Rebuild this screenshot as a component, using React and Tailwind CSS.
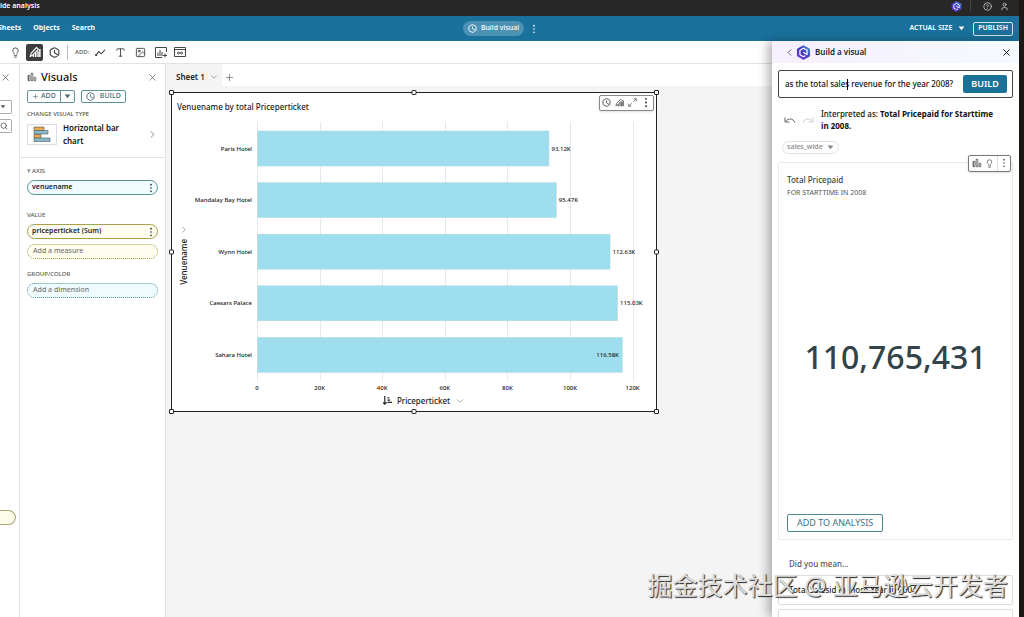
import { ChevronDown, ChevronLeft, ChevronRight, CircleHelp, Image, Lightbulb, Plus, Search, Type, User, X } from 'lucide-react';

const venues = [
  { name: 'Paris Hotel', value: 93.12 },
  { name: 'Mandalay Bay Hotel', value: 95.47 },
  { name: 'Wynn Hotel', value: 112.63 },
  { name: 'Caesars Palace', value: 115.03 },
  { name: 'Sahara Hotel', value: 116.58, inside: true },
];

const ticks = [0, 20, 40, 60, 80, 100, 120];

const QIcon = ({ className }) => (
  <svg viewBox="0 0 24 24" className={className} fill="none" stroke="currentColor" strokeWidth="2.500" strokeLinecap="round" strokeLinejoin="round">
    <path d="M17 20.5 13.5 22a3.5 3.5 0 0 1-3 0L4.500 18.800A3.500 3.500 0 0 1 2.600 15.800V8.200a3.500 3.500 0 0 1 1.900-3L10.500 2a3.500 3.500 0 0 1 3 0l6 3.200a3.500 3.500 0 0 1 1.900 3v7.600c0 1-.4 1.800-1 2.400L12 12.500V7.500" />
  </svg>
);

const QLogo = ({ className }) => (
  <svg viewBox="0 0 24 24" className={className}>
    <defs>
      <linearGradient id="q-fill" x1="0" y1="1" x2="1" y2="0">
        <stop offset="0" stopColor="#7a3fe0" />
        <stop offset="0.5" stopColor="#3d35b8" />
        <stop offset="1" stopColor="#4fa3f2" />
      </linearGradient>
    </defs>
    <path fill="url(#q-fill)" d="M12 0.500 21.500 5.500a2 2 0 0 1 1 1.800v9.400a2 2 0 0 1-1 1.800L13 23.200a2 2 0 0 1-2 0L2.500 18.500a2 2 0 0 1-1-1.800V7.300a2 2 0 0 1 1-1.800L11 .8z" />
    <path fill="none" stroke="#fff" strokeWidth="2" strokeLinecap="round" strokeLinejoin="round" d="M14.500 17.500 12 18.700 6.300 15.500V8.500L12 5.300l5.700 3.200v6.700L12 12" />
  </svg>
);

const BarsIcon = ({ className }) => (
  <svg viewBox="0 0 12 12" className={className} fill="none" stroke="currentColor">
    <path d="M1.500 4v6.500M1.500 4h2v6.500h-2zM5 1.500h2v9H5zM8.500 6.500h2v4h-2z" />
  </svg>
);

const BuildIcon = ({ className }) => (
  <svg viewBox="0 0 16 16" className={className} fill="none" stroke="currentColor" strokeWidth="1.500" strokeLinejoin="round">
    <path d="M1.500 14 3 9.500 10 2l2.500 2.500L5 12z" />
    <path d="M6 14.500v-3M9 14.500V8.500M12 14.500V7M14.500 14.500V4" strokeWidth="2" />
  </svg>
);

const Expand = ({ className }) => (
  <svg viewBox="0 0 12 12" className={className} fill="none" stroke="currentColor">
    <path d="M7 5l4-4M7.500 1H11v3.500M5 7l-4 4M1 7.500V11h3.500" />
  </svg>
);

const Dots = ({ className }) => (
  <svg viewBox="0 0 4 12" className={className} fill="currentColor">
    <circle cx="2" cy="2" r="1" />
    <circle cx="2" cy="6" r="1" />
    <circle cx="2" cy="10" r="1" />
  </svg>
);

const Caret = ({ className }) => (
  <svg viewBox="0 0 8 6" className={className} fill="currentColor">
    <path d="M.5.5h7L4 5z" />
  </svg>
);

const Undo = ({ className }) => (
  <svg viewBox="0 0 12 8" className={className} fill="none" stroke="currentColor">
    <path d="M1 1.500V6h4.500M1.500 5.500C4 2 9 2 11 6.500" />
  </svg>
);

const TopBar = () => (
  <header className="flex h-4 shrink-0 items-center bg-[#272727] text-white">
    <h1 className="-mt-1 flex-1 text-[7px] font-semibold leading-3">ide analysis</h1>
    <div className="-mt-1 flex items-center pr-[10px]">
      <button aria-label="Amazon Q"><QLogo className="size-[11px]" /></button>
      <span className="ml-2 mr-3 h-3 w-px bg-[#444]" />
      <button aria-label="Help"><CircleHelp className="size-[9px] text-gray-300" /></button>
      <button aria-label="Account" className="ml-2"><User className="size-[9px] text-gray-300" /></button>
    </div>
  </header>
);

const MenuBar = () => (
  <div className="grid h-[25px] shrink-0 grid-cols-[1fr_auto_1fr] items-center bg-[#1a719c] text-white">
    <nav className="-ml-[2px] flex gap-3 text-[7px] font-bold">
      <button>Sheets</button>
      <button>Objects</button>
      <button>Search</button>
    </nav>
    <div className="flex items-center gap-2 pr-5">
      <button className="flex h-[15px] items-center gap-1 rounded-full bg-[#4b92b4] px-[5px] text-[7px] font-medium">
        <QIcon className="size-[9px]" />
        Build visual
      </button>
      <button aria-label="More"><Dots className="h-[10px] w-1" /></button>
    </div>
    <div className="flex items-center justify-end gap-2 pr-[6px] text-[7px] font-semibold">
      <button className="flex items-center gap-[6px]">
        ACTUAL SIZE
        <Caret className="h-[5px] w-[7px]" />
      </button>
      <button className="h-[14px] rounded-xs border border-white/80 px-1">PUBLISH</button>
    </div>
  </div>
);

const Toolbar = () => (
  <div className="flex h-[23px] shrink-0 items-center border-b border-[#e3e3e3] bg-white text-[#444]">
    <button aria-label="Insights" className="ml-[10px]"><Lightbulb className="size-[11px]" /></button>
    <button aria-label="Visuals" className="ml-[5px] flex size-[17px] items-center justify-center rounded-xs bg-[#3d3d3d] text-white">
      <BuildIcon className="size-3" />
    </button>
    <button aria-label="Build with Q" className="ml-[6px]"><QIcon className="size-[11px]" /></button>
    <span className="ml-[7px] h-[15px] w-px bg-[#bbb]" />
    <span className="ml-[7px] text-[6px] font-medium text-[#555]">ADD:</span>
    <button aria-label="Add line" className="ml-[6px]">
      <svg viewBox="0 0 12 8" className="h-[7px] w-[11px]" fill="none" stroke="currentColor" strokeWidth="1.200"><path d="M1 7l3-4 3 2.500L11 1" /><path d="M.5 6.500h1v1h-1z" /></svg>
    </button>
    <button aria-label="Add text" className="ml-[9px]"><Type className="size-[11px]" /></button>
    <button aria-label="Add image" className="ml-[9px]"><Image className="size-[11px]" /></button>
    <button aria-label="Add visual" className="ml-[9px]">
      <svg viewBox="0 0 12 11" className="h-[11px] w-3" fill="none" stroke="currentColor"><path d="M11.500 5V.5H.5v10H7M3 9V5.500M5 9V3M7 9V5M10 6.500v4M8 8.500h4" /></svg>
    </button>
    <button aria-label="Add control" className="ml-[7px]">
      <svg viewBox="0 0 12 10" className="h-[10px] w-3" fill="none" stroke="currentColor"><path d="M.5.5h11v9H.5zM.5 2.500h11" /><circle cx="4.500" cy="6" r="1" /><circle cx="7.500" cy="6" r="1" /></svg>
    </button>
  </div>
);

const DataStrip = () => (
  <aside className="w-5 shrink-0 overflow-hidden border-r border-[#e3e3e3] bg-white">
    <button aria-label="Close data" className="mt-2 block"><X className="size-[11px] text-[#555]" strokeWidth={1.500} /></button>
    <button aria-label="Dataset" className="mt-[17px] flex h-[14px] w-3 items-center rounded-r-xs border border-l-0 border-[#aaa]">
      <Caret className="h-1 w-[6px] text-[#555]" />
    </button>
    <button aria-label="Search fields" className="mt-[5px] flex h-[14px] w-3 items-center rounded-r-xs border border-l-0 border-[#aaa]">
      <Search className="size-2 text-[#333]" />
    </button>
    <div className="mt-[377px] h-[15px] w-4 rounded-r-full border border-l-0 border-[#a8a573] bg-[#fdfcea]" />
  </aside>
);

const wellTone = {
  dimension: 'border-[#5a9396] bg-[#f0fbff]',
  measure: 'border-[#a9a04c] bg-[#fffdf0]',
};

const Well = ({ tone, label }) => (
  <div className={`flex h-[15px] items-center justify-between rounded-full border px-1 text-[7px] font-semibold text-[#222] ${wellTone[tone]}`}>
    {label}
    <button aria-label={`${label} options`}><Dots className="h-[10px] w-1" /></button>
  </div>
);

const EmptyWell = ({ tone, label }) => (
  <div className={`flex h-[15px] items-center rounded-full border border-dotted pl-[5px] text-[7px] font-medium text-[#777] ${wellTone[tone]}`}>
    {label}
  </div>
);

const WellTitle = ({ children }) => <h3 className="text-[6px] font-medium leading-[10px] text-[#555]">{children}</h3>;

const VisualsPanel = () => (
  <aside className="w-[146px] shrink-0 border-r border-[#e3e3e3] bg-white">
    <div className="border-b border-[#e3e3e3] px-[7px] pb-[10px]">
      <div className="flex h-[26px] items-center">
        <BarsIcon className="size-[10px] text-[#555]" />
        <h2 className="ml-1 flex-1 text-[11px] font-medium text-[#111]">Visuals</h2>
        <button aria-label="Close visuals"><X className="size-[11px] text-[#555]" strokeWidth={1.500} /></button>
      </div>
      <div className="flex gap-[6px] text-[7px] font-medium text-[#4b6f76]">
        <div className="flex h-[13px] rounded-xs border border-[#5f9299]">
          <button className="flex items-center gap-[2px] px-1"><Plus className="size-[7px]" />ADD</button>
          <button aria-label="Add options" className="border-l border-[#5f9299] px-[3px]"><Caret className="h-[5px] w-[7px]" /></button>
        </div>
        <button className="flex h-[13px] items-center gap-[5px] rounded-xs border border-[#5f9299] px-1">
          <QIcon className="size-[9px]" />
          BUILD
        </button>
      </div>
      <div className="mt-[6px]"><WellTitle>CHANGE VISUAL TYPE</WellTitle></div>
      <button className="mt-[2px] flex w-full items-center text-left">
        <span className="flex h-[21px] w-[30px] items-center justify-center border border-[#ddd]">
          <svg viewBox="0 0 18 16" className="h-4 w-[18px]" stroke="#555" strokeWidth=".6">
            <path fill="#e9a94f" d="M1 1h10v3.500H1zM1 8.500h7V12H1z" />
            <path fill="#86b9ca" d="M1 4.500h14V8H1zM1 12h16v3.500H1z" />
          </svg>
        </span>
        <span className="ml-[6px] flex-1 text-[8px] font-semibold leading-[13px] text-[#111]">Horizontal bar<br />chart</span>
        <ChevronRight className="size-[11px] text-[#555]" strokeWidth={1.500} />
      </button>
    </div>
    <div className="px-[7px] pt-2">
      <WellTitle>Y AXIS</WellTitle>
      <div className="mt-1"><Well tone="dimension" label="venuename" /></div>
      <div className="mt-[15px]"><WellTitle>VALUE</WellTitle></div>
      <div className="mt-1 flex flex-col gap-[5px]">
        <Well tone="measure" label="priceperticket (Sum)" />
        <EmptyWell tone="measure" label="Add a measure" />
      </div>
      <div className="mt-[10px]"><WellTitle>GROUP/COLOR</WellTitle></div>
      <div className="mt-1"><EmptyWell tone="dimension" label="Add a dimension" /></div>
    </div>
  </aside>
);

const x = (value) => 85 + value * 3.13;

const BarChart = () => (
  <svg viewBox="0 0 484 275" className="block w-full text-[6px] font-medium" fill="#222">
    {ticks.map((t) => (
      <g key={t}>
        <path d={`M${Math.round(x(t)) + 0.5} 2v259`} stroke="#e4e9ea" />
        <text x={x(t)} y="270" textAnchor="middle">{t === 0 ? '0' : `${t}K`}</text>
      </g>
    ))}
    {venues.map((v, i) => (
      <g key={v.name}>
        <rect x="85.500" y={11 + i * 51.6} width={v.value * 3.13} height="35" fill="#9fdeef" stroke="#b5d8dc" strokeWidth=".5" />
        <text x="80" y={30.500 + i * 51.6} textAnchor="end">{v.name}</text>
        <text x={x(v.value) + (v.inside ? -3 : 3)} y={30.500 + i * 51.6} textAnchor={v.inside ? 'end' : 'start'}>{v.value.toFixed(2)}K</text>
      </g>
    ))}
  </svg>
);

const handles = [
  '-left-[3px] -top-[3px]',
  'left-1/2 -top-[3px] -translate-x-1/2',
  '-right-[3px] -top-[3px]',
  '-left-[3px] top-1/2 -translate-y-1/2',
  '-right-[3px] top-1/2 -translate-y-1/2',
  '-left-[3px] -bottom-[3px]',
  'left-1/2 -bottom-[3px] -translate-x-1/2',
  '-right-[3px] -bottom-[3px]',
];

const VisualCard = () => (
  <section className="relative w-[486px] border border-[#222] bg-white text-[#222]">
    <div className="flex h-[27px] items-center justify-between pl-[5px] pr-[2px]">
      <h2 className="text-[8px] font-medium">Venuename by total Priceperticket</h2>
      <div className="-mt-2 flex h-4 items-center gap-1 rounded-xs border border-[#888] bg-white px-[2px] text-[#555] shadow-sm">
        <button aria-label="Ask Q"><QIcon className="size-[9px]" /></button>
        <button aria-label="Edit visual"><BuildIcon className="size-[9px]" /></button>
        <button aria-label="Maximize"><Expand className="size-[9px]" /></button>
        <button aria-label="Visual menu" className="px-[3px]"><Dots className="h-[11px] w-1 text-[#222]" /></button>
      </div>
    </div>
    <BarChart />
    <button className="mx-auto flex h-4 items-center gap-[5px] pb-[5px] pl-5 text-[8px] font-medium">
      <svg viewBox="0 0 10 10" className="size-[9px]" fill="none" stroke="currentColor" strokeWidth="1.300"><path d="M2 0v9M0 7l2 2 2-2M5 2h2M5 4.500h3M5 7h5" /></svg>
      Priceperticket
      <ChevronDown className="size-[10px] text-[#777]" strokeWidth={1.500} />
    </button>
    <button className="absolute left-[6px] top-[132px] flex rotate-180 items-center gap-1 text-[8px] font-medium [writing-mode:vertical-rl]">
      Venuename
      <ChevronLeft className="size-[10px] text-[#777]" strokeWidth={1.500} />
    </button>
    {handles.map((h) => (
      <span key={h} className={`absolute size-[5px] rounded-[1px] border border-[#222] bg-white ${h}`} />
    ))}
  </section>
);

const Sheet = () => (
  <main className="min-w-0 flex-1 bg-[#f4f4f4] pl-[3px]">
    <div className="flex h-[22px] items-center bg-white">
      <button className="flex h-full items-center gap-1 bg-[#f4f4f4] pl-[7px] pr-[3px] pt-1 text-[8px] font-semibold text-[#222]">
        Sheet 1
        <ChevronDown className="size-[10px] text-[#777]" strokeWidth={1.500} />
      </button>
      <button aria-label="Add sheet" className="ml-[2px] pt-1"><Plus className="size-[11px] text-[#666]" strokeWidth={1.500} /></button>
    </div>
    <div className="pl-[2px] pt-[6px]">
      <VisualCard />
    </div>
  </main>
);

const BuildPanel = () => (
  <aside className="relative flex w-[247px] shrink-0 flex-col bg-white shadow-[-4px_0_10px_rgba(0,0,0,0.3)]">
    <div className="flex h-[22px] shrink-0 items-center bg-linear-to-r from-[#f6effd] to-[#f5faff] pl-3 pr-[7px]">
      <button aria-label="Back"><ChevronLeft className="size-[11px] text-[#333]" strokeWidth={1.500} /></button>
      <QLogo className="ml-px size-[15px]" />
      <h2 className="ml-1 flex-1 text-[8px] font-semibold text-[#222]">Build a visual</h2>
      <button aria-label="Close"><X className="size-[11px] text-[#111]" strokeWidth={2} /></button>
    </div>
    <form className="relative mx-[6px] mt-[7px] flex h-7 shrink-0 items-center rounded-xs border border-[#444] pl-[6px] pr-[5px]">
      <input aria-label="Question" defaultValue="as the total sales revenue for the year 2008?" className="min-w-0 flex-1 text-[8px] font-medium text-[#111] outline-none" />
      <span className="absolute left-[68px] top-2 h-[11px] w-px bg-black" />
      <button type="button" className="h-[18px] w-11 rounded-xs bg-[#1b7299] text-[9px] font-semibold text-white">BUILD</button>
    </form>
    <div className="mt-[10px] flex items-center px-3">
      <button aria-label="Undo"><Undo className="h-2 w-3 text-[#666]" /></button>
      <button aria-label="Redo" className="ml-[6px]"><Undo className="h-2 w-3 -scale-x-100 text-[#ccc]" /></button>
      <p className="ml-[7px] pr-3 text-[8px] font-medium leading-3 text-[#111]">Interpreted as: <b>Total Pricepaid for Starttime in 2008.</b></p>
    </div>
    <button className="ml-[10px] mt-[9px] flex h-[15px] items-center gap-1 self-start rounded-full border border-[#e0e0e0] px-1 text-[7px] font-medium text-[#888]">
      sales_wide
      <Caret className="h-[5px] w-[7px]" />
    </button>
    <section className="relative mx-[6px] mt-2 flex h-[378px] shrink-0 flex-col items-start rounded-xs border border-[#e6eaec] px-2 pb-[7px] pt-[11px]">
      <div className="absolute -top-2 right-px flex h-[17px] items-center rounded-xs border border-[#777] bg-white text-[#555] shadow-sm">
        <button aria-label="Chart type" className="pl-[3px]"><BarsIcon className="size-[10px]" /></button>
        <button aria-label="Insight" className="px-[3px]"><Lightbulb className="size-[9px]" /></button>
        <button aria-label="More options" className="flex h-full items-center border-l border-[#ddd] px-1"><Dots className="h-[10px] w-1" /></button>
      </div>
      <h3 className="text-[8px] font-medium leading-3 text-[#33474f]">Total Pricepaid</h3>
      <p className="mt-px text-[7px] leading-3 text-[#555]">FOR STARTTIME IN 2008</p>
      <p className="flex w-full flex-1 items-center justify-center pt-[2px] text-[32px] font-medium text-[#32444a]">110,765,431</p>
      <button className="h-[18px] rounded-xs border border-[#4f878e] px-[9px] text-[9px] text-[#3f6f77]">ADD TO ANALYSIS</button>
    </section>
    <p className="ml-[17px] mt-[18px] text-[8px] font-medium leading-3 text-[#555]">Did you mean...</p>
    <ul className="mx-[6px] mt-[5px] flex flex-col gap-1 text-[8px] font-medium text-[#222]">
      <li><button className="h-[30px] w-full rounded-xs border border-[#ddd] px-[10px] text-left">Total Salesid in more Year in 2004</button></li>
      <li><button aria-label="Next suggestion" className="h-[30px] w-full rounded-xs border border-[#ddd]" /></li>
    </ul>
  </aside>
);

const App = () => {
  return (
    <div className="relative h-screen overflow-hidden bg-[#1c1916] pr-[5px]" style={{ fontFamily: "'Noto Sans', 'Noto Sans CJK SC', sans-serif" }}>
      <div className="flex h-full flex-col">
        <TopBar />
        <MenuBar />
        <div className="flex min-h-0 flex-1">
          <div className="flex min-w-0 flex-1 flex-col">
            <Toolbar />
            <div className="flex min-h-0 flex-1">
              <DataStrip />
              <VisualsPanel />
              <Sheet />
            </div>
          </div>
          <BuildPanel />
        </div>
      </div>
      <p className="absolute bottom-[14px] right-4 text-[25px] leading-9 text-[#dcdcdc] [text-shadow:1px_1px_1px_#222]">
        掘金技术社区 @ 亚马逊云开发者
      </p>
    </div>
  );
};

export default App;
